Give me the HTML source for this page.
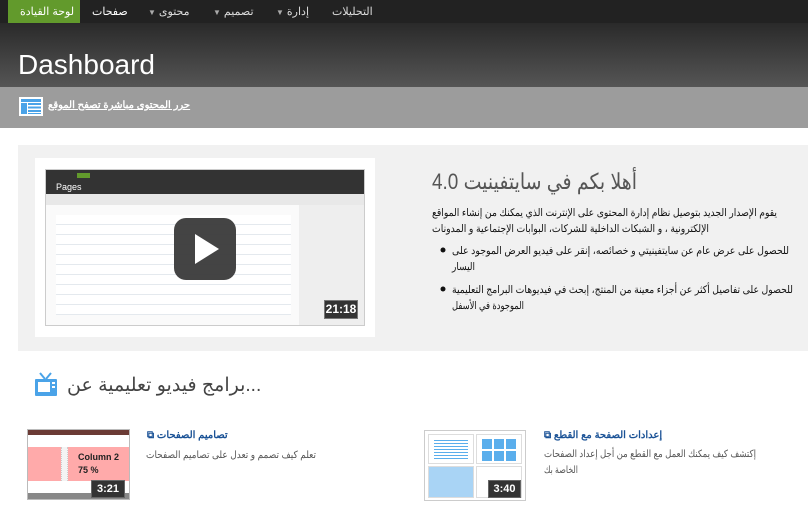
<!DOCTYPE html>
<html><head><meta charset="utf-8"><style>
*{margin:0;padding:0;box-sizing:border-box}
body{width:808px;height:509px;overflow:hidden;background:#fff;font-family:"Liberation Sans","Noto Sans CJK SC",sans-serif;position:relative;font-size:11px}
.a{position:absolute;white-space:nowrap}
#nav{position:absolute;left:0;top:0;width:808px;height:23px;background:#222}
.n{position:absolute;top:5px;color:#ddd;font-size:11px}
.n i{font-style:normal;font-size:8px;color:#aaa;margin-right:3px}
#hdr{position:absolute;left:0;top:23px;width:808px;height:64px;background:linear-gradient(#2a2a2a,#555)}
#bar{position:absolute;left:0;top:87px;width:808px;height:41px;background:#9c9c9c}
#panel{position:absolute;left:18px;top:145px;width:790px;height:206px;background:#f1f1f1}
.ar{direction:rtl;width:max-content}
svg text{font-family:"Liberation Sans","Noto Sans CJK SC",sans-serif}
</style></head><body>
<div id="nav">
<div style="position:absolute;left:8px;top:0;width:72px;height:23px;background:#629a2c"></div>
<div class="n" style="left:20px;color:#fff">لوحة القيادة</div>
<div class="n" style="left:92px;color:#fff">صفحات</div>
<div class="n" style="left:148px"><i>▼</i>محتوى</div>
<div class="n" style="left:213px"><i>▼</i>تصميم</div>
<div class="n" style="left:276px"><i>▼</i>إدارة</div>
<div class="n" style="left:332px">التحليلات</div>
</div>
<div id="hdr"><div class="a" style="left:18px;top:26px;color:#fff;font-size:28px">Dashboard</div></div>
<div id="bar">
<svg class="a" style="left:19px;top:10px" width="24" height="19" viewBox="0 0 24 19"><rect width="24" height="19" fill="#fff"/><rect x="2" y="2" width="20" height="3" fill="#4aa3e8"/><rect x="2" y="6" width="6" height="11" fill="#4aa3e8"/><rect x="9" y="6" width="13" height="2" fill="#4aa3e8"/><rect x="9" y="9.5" width="13" height="2" fill="#4aa3e8"/><rect x="9" y="13" width="13" height="2" fill="#4aa3e8"/><rect x="9" y="16" width="13" height="1" fill="#4aa3e8"/></svg>
<div class="a" style="left:48px;top:13px;color:#fff;font-size:10px;font-weight:bold;text-decoration:underline">حرر المحتوى مباشرة تصفح الموقع</div>
</div>
<div id="panel"></div>
<div class="a" style="left:35px;top:158px;width:340px;height:179px;background:#fff"></div>
<div class="a" style="left:45px;top:169px;width:320px;height:157px;background:#fafafa;border:1px solid #ccc;overflow:hidden">
<div style="height:24px;background:#333"></div>
<div style="position:absolute;left:31px;top:3px;width:13px;height:5px;background:#629a2c"></div>
<div style="position:absolute;left:10px;top:12px;color:#fff;font-size:9px">Pages</div>
<div style="position:absolute;left:0;top:24px;width:318px;height:11px;background:#e8e8e8"></div>
<div style="position:absolute;left:253px;top:35px;width:65px;height:121px;background:#eee"></div>
<div style="position:absolute;left:10px;top:45px;width:235px;height:100px;background:repeating-linear-gradient(#fff 0 9px,#e4e9ee 9px 10px)"></div>
</div>
<div class="a" style="left:174px;top:218px;width:62px;height:62px;background:#3a3a3a;border-radius:12px;opacity:.95"></div>
<svg class="a" style="left:195px;top:234px" width="24" height="30"><polygon points="0,0 24,15 0,30" fill="#fff"/></svg>
<div class="a" style="left:324px;top:300px;width:34px;height:19px;background:#333;border:1px solid #777;color:#fff;font-weight:bold;font-size:12px;text-align:center;line-height:17px">21:18</div>

<svg class="a" style="left:0;top:0" width="808" height="509">
<g direction="rtl" text-anchor="start" style="unicode-bidi:embed">
<text x="637" y="189" font-size="22" fill="#555" textLength="205" lengthAdjust="spacingAndGlyphs">أهلا بكم في سايتفينيت 4.0</text>
<g font-size="10.5" fill="#111">
<text x="777" y="216" textLength="345" lengthAdjust="spacingAndGlyphs">يقوم الإصدار الجديد بتوصيل نظام إدارة المحتوى على الإنترنت الذي يمكنك من إنشاء المواقع</text>
<text x="709" y="232" textLength="277" lengthAdjust="spacingAndGlyphs">الإلكترونية ، و الشبكات الداخلية للشركات، البوابات الإجتماعية و المدونات</text>
<text x="789" y="254" textLength="337" lengthAdjust="spacingAndGlyphs">للحصول على عرض عام عن سايتفينيتي و خصائصه، إنقر على فيديو العرض الموجود على</text>
<text x="475" y="270" textLength="23" lengthAdjust="spacingAndGlyphs">اليسار</text>
<text x="793" y="293" textLength="341" lengthAdjust="spacingAndGlyphs">للحصول على تفاصيل أكثر عن أجزاء معينة من المنتج، إبحث في فيديوهات البرامج التعليمية</text>
<text x="524" y="309" textLength="72" lengthAdjust="spacingAndGlyphs">الموجودة في الأسفل</text>
</g>
<g font-size="10" fill="#555">
<text x="316" y="458" textLength="170" lengthAdjust="spacingAndGlyphs">تعلم كيف تصمم و تعدل على تصاميم الصفحات</text>
<text x="756" y="457" textLength="212" lengthAdjust="spacingAndGlyphs">إكتشف كيف يمكنك العمل مع القطع من أجل إعداد الصفحات</text>
<text x="578" y="473" textLength="34" lengthAdjust="spacingAndGlyphs">الخاصة بك</text>
</g>
</g>
<circle cx="443" cy="250" r="2.5" fill="#111"/>
<circle cx="443" cy="289" r="2.5" fill="#111"/>
</svg>

<svg class="a" style="left:34px;top:372px" width="24" height="26" viewBox="0 0 24 26"><path d="M6 1l5 6M17 1l-5 6" stroke="#4aa3e8" stroke-width="2"/><rect x="1" y="7" width="22" height="17" rx="1" fill="#4aa3e8"/><rect x="4" y="10" width="12" height="10" fill="#fff"/><rect x="18" y="10" width="3" height="2" fill="#fff"/><rect x="18" y="14" width="3" height="2" fill="#fff"/></svg>
<div class="a ar" style="left:67px;top:374px;font-size:19px;color:#444">...برامج فيديو تعليمية عن</div>
<div class="a" style="left:27px;top:429px;width:103px;height:71px;background:#888;border:1px solid #bbb;overflow:hidden">
<div style="height:5px;background:#6b3b35"></div><div style="height:12px;background:#fff"></div>
<div style="height:34px;background:#ffaaaa;position:relative"><div style="position:absolute;left:33px;top:0;width:7px;height:34px;background:#f4f4f4;border-left:1px dotted #ccc;border-right:1px dotted #ccc"></div></div>
<div style="height:12px;background:#fff"></div></div>
<div class="a" style="left:78px;top:451px;font-size:9px;font-weight:bold;color:#222;line-height:13px">Column 2<br>75 %</div>
<div class="a" style="left:91px;top:480px;width:34px;height:18px;background:#333;border:1px solid #666;color:#fff;font-weight:bold;text-align:center;line-height:16px">3:21</div>
<div class="a ar" style="left:147px;top:430px;color:#1a5296;font-weight:bold;font-size:10px">تصاميم الصفحات ⧉</div>
<div class="a" style="left:424px;top:430px;width:102px;height:71px;border:1px solid #ccc;background:#fff">
<div style="position:absolute;left:3px;top:3px;width:46px;height:30px;border:1px solid #ddd;background:repeating-linear-gradient(#5aaeec 0 1px,#fff 1px 3px) 5px 5px/34px 20px no-repeat"></div>
<div style="position:absolute;left:51px;top:3px;width:46px;height:30px;border:1px solid #ddd;background:linear-gradient(#fff 0 0) 5px 14px/34px 2px no-repeat,repeating-linear-gradient(90deg,#5aaeec 0 10px,#fff 10px 12px) 5px 4px/34px 22px no-repeat"></div>
<div style="position:absolute;left:3px;top:35px;width:46px;height:32px;border:1px solid #ddd;background:#a9d4f5"></div>
<div style="position:absolute;left:51px;top:35px;width:46px;height:32px;border:1px solid #ddd"></div></div>
<div class="a" style="left:488px;top:480px;width:33px;height:18px;background:#333;border:1px solid #666;color:#fff;font-weight:bold;text-align:center;line-height:16px">3:40</div>
<div class="a ar" style="left:544px;top:430px;color:#1a5296;font-weight:bold;font-size:10px">إعدادات الصفحة مع القطع ⧉</div>
</body></html>
